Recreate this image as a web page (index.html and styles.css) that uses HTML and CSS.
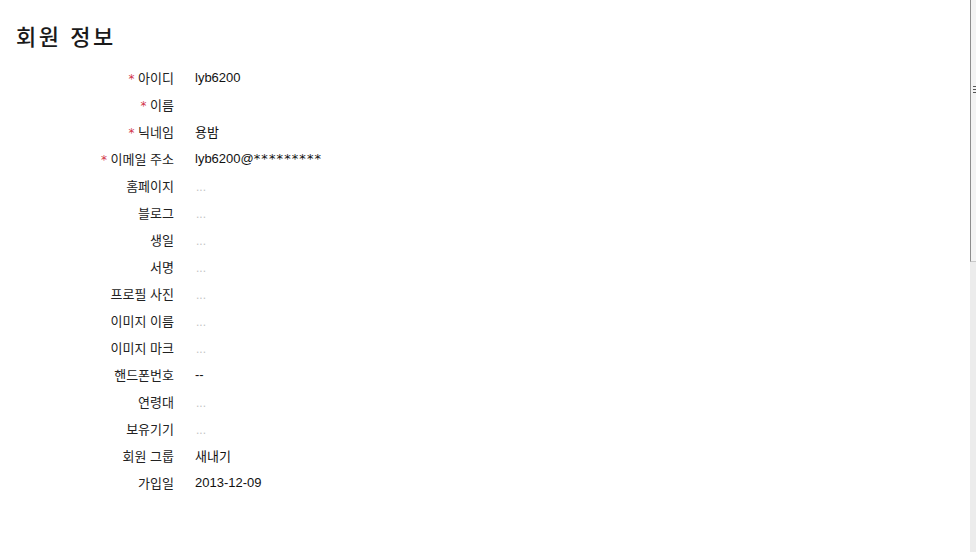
FILE: index.html
```html
<!DOCTYPE html>
<html lang="ko">
<head>
<meta charset="utf-8">
<title>회원 정보</title>
<link rel="stylesheet" href="styles.css">
</head>
<body>
<div class="page">
  <h1 class="title">회원 정보</h1>
  <dl class="info">
    <dt><span class="req">*</span> 아이디</dt><dd class="val">lyb6200</dd>
    <dt><span class="req">*</span> 이름</dt><dd class="val"></dd>
    <dt><span class="req">*</span> 닉네임</dt><dd class="val ko">용밤</dd>
    <dt><span class="req">*</span> 이메일 주소</dt><dd class="val">lyb6200@<span class="mask">*********</span></dd>
    <dt>홈페이지</dt><dd class="empty">...</dd>
    <dt>블로그</dt><dd class="empty">...</dd>
    <dt>생일</dt><dd class="empty">...</dd>
    <dt>서명</dt><dd class="empty">...</dd>
    <dt>프로필 사진</dt><dd class="empty">...</dd>
    <dt>이미지 이름</dt><dd class="empty">...</dd>
    <dt>이미지 마크</dt><dd class="empty">...</dd>
    <dt>핸드폰번호</dt><dd class="val">--</dd>
    <dt>연령대</dt><dd class="empty">...</dd>
    <dt>보유기기</dt><dd class="empty">...</dd>
    <dt>회원 그룹</dt><dd class="val ko">새내기</dd>
    <dt>가입일</dt><dd class="val">2013-12-09</dd>
  </dl>
</div>
<div class="scrollbar"><div class="thumb"><span class="grip"></span></div></div>
</body>
</html>
```

FILE: styles.css
```css
html, body {
  margin: 0;
  padding: 0;
  background: #fff;
}

body {
  font-family: "Noto Sans CJK KR", "Liberation Sans", sans-serif;
  color: #111;
}

.page {
  padding: 19px 0 0 16px;
}

.title {
  margin: 0;
  font-size: 22px;
  line-height: 32px;
  font-weight: 500;
  letter-spacing: 2.5px;
  color: #1a1a1a;
}

.info {
  margin: 13px 0 0 0;
  display: grid;
  grid-template-columns: 158px auto;
  grid-auto-rows: 27px;
  column-gap: 21px;
  align-items: center;
}

.info dt {
  text-align: right;
  font-size: 13px;
  height: 27px;
  line-height: 27px;
  overflow: hidden;
  color: #222;
}

.info dd {
  margin: 0;
  height: 27px;
  line-height: 27px;
  overflow: hidden;
}

.req {
  color: #d2354a;
  font-family: "DejaVu Sans", sans-serif;
  font-size: 12px;
  line-height: 0;
}

.val {
  font-family: "Liberation Sans", "Noto Sans CJK KR", sans-serif;
  font-size: 13px;
  color: #111;
}

.val.ko {
  font-family: "Noto Sans CJK KR", sans-serif;
}

.mask {
  font-family: "DejaVu Sans", sans-serif;
  font-size: 13px;
  letter-spacing: 1.1px;
  line-height: 0;
}

.empty {
  font-family: "Liberation Sans", sans-serif;
  font-size: 12px;
  color: #c4c4c4;
  padding-left: 1px;
  padding-top: 2px;
  box-sizing: border-box;
}

.scrollbar {
  position: fixed;
  top: 0;
  right: 0;
  width: 6px;
  height: 100%;
  background: #ececec;
}

.thumb {
  position: relative;
  height: 262px;
  background: #f3f3f3;
  border-left: 1px solid #8d8d8d;
  border-bottom: 1px solid #c8c8c8;
  box-sizing: border-box;
}

.grip {
  position: absolute;
  left: 2px;
  top: 86px;
  width: 4px;
  height: 9px;
  background: repeating-linear-gradient(to bottom, #555 0 1px, transparent 1px 3px);
}
```
